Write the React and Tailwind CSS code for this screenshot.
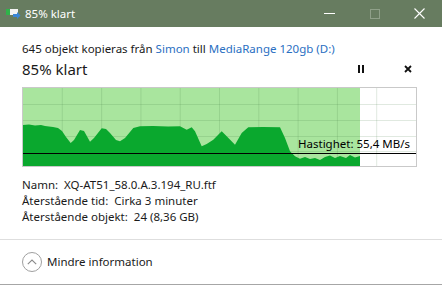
import React from "react";

const profile = [
  [0, 37], [6, 36.5], [12, 37.5], [18, 37], [22, 38], [30, 39], [35, 40], [39, 43], [43, 49], [47.7, 55], [51, 52], [57, 42],
  [61, 43], [67, 53.7], [71, 50], [78.7, 40.3], [83, 41], [87, 45], [93, 52], [97, 53.3], [102, 50],
  [110.3, 40], [117, 38.3], [130, 38], [145, 38.5], [157, 38.3], [163.7, 41.7], [168.7, 39.3], [172, 43.3],
  [178.7, 58.3], [183.7, 56], [190.3, 51.7], [198.7, 43.3], [203.7, 48.3], [212, 56.7], [218.7, 45],
  [225.3, 39.3], [240, 39], [257, 39.3], [262, 50], [267, 63.3], [272, 68.3], [277, 70.7], [282, 69],
  [287, 71], [292, 70], [297, 72], [302, 69], [307, 67.5], [312, 70], [317, 68], [323, 70], [327, 67],
  [332, 69.5], [337, 68],
];

const pathD =
  "M0,78 " + profile.map(([x, y]) => `L${x},${y}`).join(" ") + " L337,78 Z";

function Chart() {
  const vLines = [];
  for (let i = 1; i < 10; i++) vLines.push(i * 39.3);
  const hLines = [16, 32, 48, 63];
  return (
    <div className="relative w-[395px] h-[80px] border border-[#c9c9c9] bg-white">
      <svg width="393" height="78" viewBox="0 0 393 78" className="block">
        <rect x="0" y="0" width="337" height="78" fill="#a9e59e" />
        {vLines.map((x) => (
          <line key={"v" + x} x1={x} y1="0" x2={x} y2="78" stroke="rgba(60,120,60,0.16)" strokeWidth="1" />
        ))}
        {hLines.map((y) => (
          <line key={"h" + y} x1="0" y1={y + 0.5} x2="393" y2={y + 0.5} stroke="rgba(60,120,60,0.16)" strokeWidth="1" />
        ))}
        <path d={pathD} fill="#0aa82e" />
        <line x1="0" y1="65.5" x2="393" y2="65.5" stroke="#000" strokeWidth="1" />
      </svg>
      <div className="absolute right-[6px] top-[48px] text-[11.5px] leading-[16px] text-black">
        Hastighet: 55,4 MB/s
      </div>
    </div>
  );
}

export default function App() {
  return (
    <div className="w-[442px] h-[285px] bg-white flex flex-col text-[11.5px] text-[#1a1a1a] font-['Segoe_UI','Noto_Sans',sans-serif] overflow-hidden">
      {/* Title bar */}
      <div className="h-[27px] bg-[#677c60] flex items-center text-white shrink-0">
        <div className="w-[25px] flex items-center justify-center">
          <svg width="15" height="11" viewBox="0 0 15 11" className="ml-[2px]">
            <rect x="0" y="1" width="12" height="6" fill="#f4f4f4" />
            <rect x="0" y="1" width="4" height="6" fill="#2fb34a" />
            <path d="M7 6 H11 V4 L14.5 7.5 L11 11 V9 H7 Z" fill="#3a86d6" />
          </svg>
        </div>
        <div className="text-[11.5px] leading-[16px] flex-1">85% klart</div>
        <div className="w-[45px] h-full flex items-center justify-center">
          <div className="w-[11px] h-[1px] bg-white" />
        </div>
        <div className="w-[45px] h-full flex items-center justify-center">
          <div className="w-[10px] h-[10px] border border-[#8fa089]" />
        </div>
        <div className="w-[45px] h-full flex items-center justify-center">
          <svg width="11" height="11" viewBox="0 0 11 11">
            <path d="M0.5 0.5 L10.5 10.5 M10.5 0.5 L0.5 10.5" stroke="#fff" strokeWidth="1.1" />
          </svg>
        </div>
      </div>

      {/* Content */}
      <div className="pl-[22px] pt-[14px] flex flex-col">
        <div className="leading-[16px] whitespace-nowrap">
          645 objekt kopieras från <span className="text-[#2a6fc2]">Simon</span> till{" "}
          <span className="text-[#2a6fc2]">MediaRange 120gb (D:)</span>
        </div>
        <div className="mt-[2px] h-[20px] flex items-center w-[395px]">
          <div className="text-[15px] leading-[20px] flex-1">85% klart</div>
          <div className="w-[20px] flex justify-center gap-[2px] mr-[33px]">
            <div className="w-[2px] h-[8px] bg-[#111]" />
            <div className="w-[2px] h-[8px] bg-[#111]" />
          </div>
          <svg width="8" height="8" viewBox="0 0 8 8" className="mr-[5px]">
            <path d="M1 1 L7 7 M7 1 L1 7" stroke="#111" strokeWidth="1.8" />
          </svg>
        </div>
        <div className="mt-[8px]">
          <Chart />
        </div>
        <div className="mt-[10px] flex flex-col leading-[16px] whitespace-pre">
          <div>Namn:  XQ-AT51_58.0.A.3.194_RU.ftf</div>
          <div>Återstående tid:  Cirka 3 minuter</div>
          <div>Återstående objekt:  24 (8,36 GB)</div>
        </div>
      </div>

      <div className="mt-[14px] border-t border-[#dedede] flex-1 flex items-center pl-[22px] border-b border-b-[#a6a6a6]">
        <div className="w-[20px] h-[20px] rounded-full border border-[#a0a0a0] flex items-center justify-center mr-[5px]">
          <svg width="10" height="6" viewBox="0 0 10 6">
            <path d="M0.8 5.2 L5 1 L9.2 5.2" stroke="#8a8a8a" strokeWidth="1.1" fill="none" />
          </svg>
        </div>
        <div className="text-[11.5px] leading-[16px]">Mindre information</div>
      </div>
    </div>
  );
}
